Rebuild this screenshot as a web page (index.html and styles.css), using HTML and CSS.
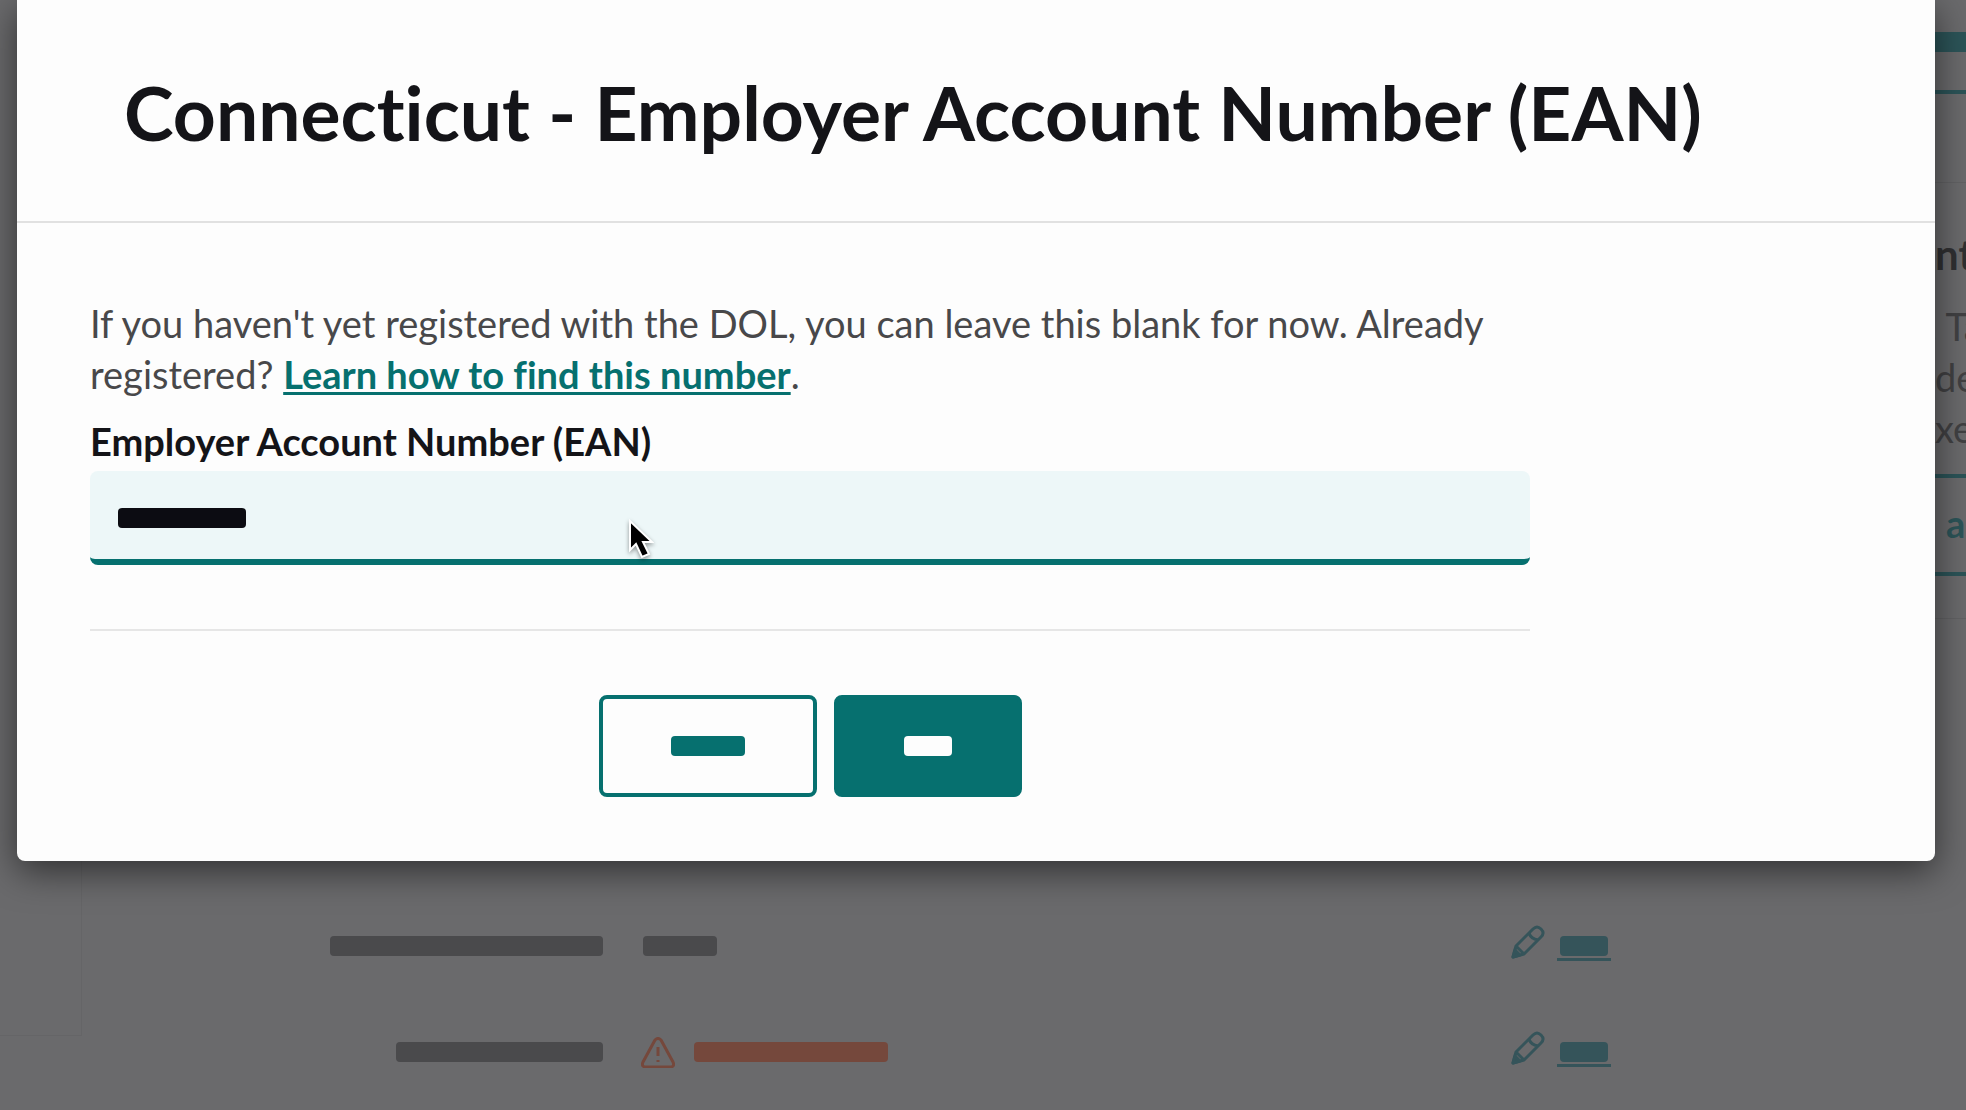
FILE: index.html
```html
<!DOCTYPE html>
<html lang="en">
<head>
<meta charset="utf-8">
<meta name="viewport" content="width=device-width, initial-scale=1">
<title>Employer Account Number</title>
<link rel="stylesheet" href="styles.css">
</head>
<body>
<div class="page">
  <nav class="rail"></nav>
  <main class="details">
    <div class="row">
      <div class="row-label"><span class="mask mask-long"></span></div>
      <div class="row-value"><span class="mask mask-short"></span></div>
      <div class="row-edit">
        <svg class="pencil" viewBox="0 0 34 34" aria-hidden="true"><path d="M2 32 5 21 22 4Q26 0 30 4Q34 8 30 12L13 29ZM5 21 13 29M18 8Q20 14 27 15"/><path class="tip" d="M2 32 4 25 9 30Z"/></svg>
        <a class="edit" href="#" aria-label="Edit"><span class="mask mask-edit"></span></a>
      </div>
    </div>
    <div class="row">
      <div class="row-label"><span class="mask mask-medium"></span></div>
      <div class="row-value">
        <svg class="warning" viewBox="0 0 34 31" aria-hidden="true"><path d="M14 3Q17 0 20 3L32 25Q34 30 29 30H5Q0 30 2 25ZM17 10V19M17 23V25"/></svg>
        <span class="mask mask-error"></span>
      </div>
      <div class="row-edit">
        <svg class="pencil" viewBox="0 0 34 34" aria-hidden="true"><path d="M2 32 5 21 22 4Q26 0 30 4Q34 8 30 12L13 29ZM5 21 13 29M18 8Q20 14 27 15"/><path class="tip" d="M2 32 4 25 9 30Z"/></svg>
        <a class="edit" href="#" aria-label="Edit"><span class="mask mask-edit"></span></a>
      </div>
    </div>
  </main>
  <aside class="help">
    <div class="help-bar"></div>
    <div class="help-line"></div>
    <h2 class="help-title">nt</h2>
    <p class="help-text">. Ta<br>de<br>xe</p>
    <a class="help-link" href="#">a</a>
    <div class="help-end"></div>
  </aside>
</div>

<div class="dialog" role="dialog" aria-labelledby="dialog-title">
  <header class="dialog-head">
    <h1 class="dialog-title" id="dialog-title">Connecticut - Employer Account Number (EAN)</h1>
  </header>
  <form class="form">
    <p class="intro">If you haven't yet registered with the DOL, you can leave this blank for now. Already registered? <a class="learn" href="#">Learn how to find this number</a>.</p>
    <label class="label" for="ean">Employer Account Number (EAN)</label>
    <div class="field">
      <input class="input" id="ean" type="text">
      <span class="mask mask-input"></span>
    </div>
    <hr class="rule">
    <div class="actions">
      <button class="button button-outline" type="button" aria-label="Cancel"><span class="mask mask-cancel"></span></button>
      <button class="button button-solid" type="button" aria-label="Save"><span class="mask mask-save"></span></button>
    </div>
  </form>
</div>

<svg class="cursor" viewBox="0 0 28 42" aria-hidden="true"><path d="M4 3V32L10 26 16 39 23 36 17 24H26Z"/></svg>
</body>
</html>
```
FILE: styles.css
```css
* { box-sizing: border-box; }

body {
  margin: 0;
  font-family: Lato, "Open Sans", sans-serif;
  font-size: 38px;
  font-variant-ligatures: none;
  line-height: 51px;
  color: #48484a;
  background: #6a6a6c;
}

.page {
  display: grid;
  grid-template-columns: 82px 1fr 31px;
  min-height: 100vh;
}

.rail {
  margin-bottom: 74px;
  border-right: 1px solid #656567;
  border-bottom: 1px solid #656567;
}

.details {
  display: flex;
  flex-direction: column;
  justify-content: flex-end;
  padding: 0 324px 5px 0;
}

.row {
  display: grid;
  grid-template-columns: 521px 1fr auto;
  column-gap: 38px;
  align-items: center;
  height: 106px;
}

.row-label { display: flex; justify-content: flex-end; }
.row-value { display: flex; align-items: center; gap: 19px; }
.row-edit { display: flex; align-items: flex-start; gap: 12px; margin-bottom: 6px; }

.mask {
  display: block;
  height: 20px;
  border-radius: 4px;
  background: #4a4a4c;
}

.mask-long { width: 273px; }
.mask-medium { width: 207px; }
.mask-short { width: 74px; margin-left: 2px; }
.mask-error { width: 194px; background: #75483c; }
.mask-edit { width: 48px; background: #35545a; }
.mask-cancel { width: 74px; background: #06706f; }
.mask-save { width: 48px; background: #fdfdfd; }

.mask-input {
  width: 128px;
  margin-left: 28px;
  background: #0c0c12;
  pointer-events: none;
}

.edit {
  padding: 11px 3px 2px;
  border-bottom: 3px solid #35545a;
}

.pencil, .warning { fill: none; stroke: #35545a; stroke-width: 3; stroke-linejoin: round; }
.pencil { width: 34px; height: 34px; }
.tip { fill: #35545a; }
.warning { width: 34px; height: 31px; stroke: #75483c; }

.help {
  overflow: hidden;
  white-space: nowrap;
}

.help-bar { height: 20px; margin-top: 32px; background: #2c5458; }
.help-line { height: 93px; margin-top: 38px; border-top: 4px solid #2c5458; border-bottom: 1px solid #626264; }
.help-title { margin: 46px 0 22px; font-size: 42px; line-height: 50px; color: #303032; }
.help-text { margin: 0; color: #414143; text-indent: -7px; }

.help-link {
  display: block;
  height: 102px;
  margin-top: 20px;
  padding-left: 11px;
  border: solid #2c5458;
  border-width: 4px 0;
  font-weight: 700;
  line-height: 90px;
  text-decoration: none;
  color: #2c5458;
}

.help-end { height: 43px; border-bottom: 1px solid #626264; }

.dialog {
  position: absolute;
  top: 0;
  left: 17px;
  right: 31px;
  border-radius: 0 0 8px 8px;
  background: #fdfdfd;
  box-shadow: 0 10px 36px rgba(0, 0, 0, 0.55);
}

.dialog-head {
  padding: 69px 107px 66px;
  border-bottom: 2px solid #e1e1e1;
}

.dialog-title {
  margin: 0;
  font-size: 75px;
  font-weight: 700;
  line-height: 86px;
  color: #141418;
}

.form {
  max-width: 1513px;
  padding: 75px 0 64px 73px;
}

.intro { margin: 0; }
.learn { font-weight: 700; color: #06706f; text-decoration-thickness: 3px; text-underline-offset: 3px; }

.label {
  display: block;
  margin: 16px 0 4px;
  font-weight: 700;
  color: #141418;
}

.field { display: grid; align-items: center; }
.field > * { grid-area: 1 / 1; }

.input {
  width: 100%;
  height: 94px;
  padding: 0 28px;
  border: 0;
  border-bottom: 6px solid #06706f;
  border-radius: 8px;
  outline: 0;
  background: #edf7f8;
  font: inherit;
}

.rule {
  margin: 64px 0;
  border: 0;
  border-top: 2px solid #e6e6e6;
}

.actions { display: flex; justify-content: center; gap: 17px; }

.button {
  display: flex;
  align-items: center;
  justify-content: center;
  height: 102px;
  border: 4px solid #06706f;
  border-radius: 8px;
}

.button-outline { padding: 0 68px; background: #fdfdfd; }
.button-solid { padding: 0 66px; background: #06706f; }

.cursor {
  position: absolute;
  top: 518px;
  left: 626px;
  width: 28px;
  height: 42px;
  fill: #000;
  stroke: #fff;
  stroke-width: 2;
  filter: drop-shadow(0 2px 2px rgba(0, 0, 0, 0.4));
}
```
